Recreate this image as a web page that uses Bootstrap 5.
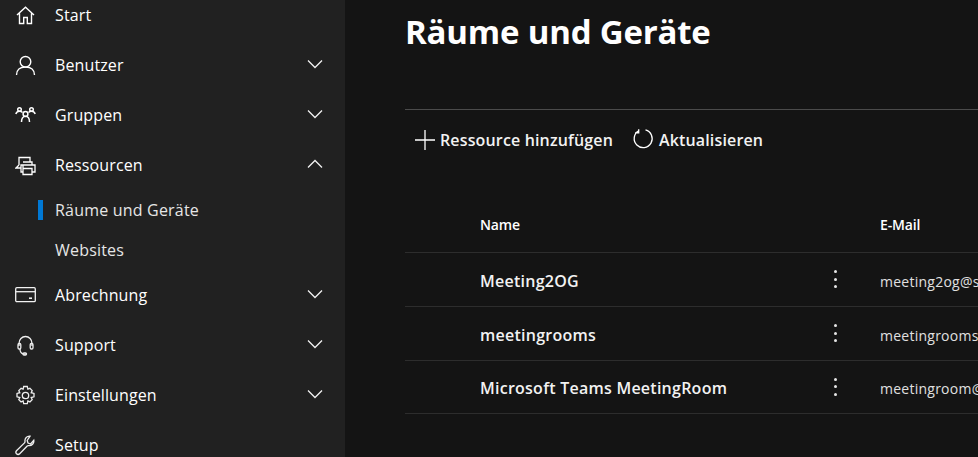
<!DOCTYPE html>
<html lang="de">
<head>
<meta charset="utf-8">
<title>Räume und Geräte</title>
<link href="https://cdn.jsdelivr.net/npm/bootstrap@5.3.0/dist/css/bootstrap.min.css" rel="stylesheet">
<style>
html,body{height:457px;overflow:hidden;margin:0;background:#141414}
body{font-family:"Open Sans","Noto Sans",sans-serif;color:#fff}
.shell{height:457px;width:978px;overflow:hidden}
.side{width:345px;background:#212121;flex:none;height:457px;overflow:hidden}
.side-list{margin-top:-10px}
.nav-row{height:50px;padding-left:15px;padding-right:21px;color:#fff;font-size:16px;letter-spacing:.12px}
.nav-row svg.ic{width:21px;height:21px;flex:none;margin-right:19px}
.nav-row span{flex:1}
.nav-row .chev{margin-top:-2px}
.sub-row{height:40px;padding-left:55px;position:relative;color:#e6e6e6;font-size:16px;letter-spacing:.2px}
.sub-mark{position:absolute;left:38px;top:10px;width:5px;height:20px;background:#0078d4}
.chev{width:18px;height:10px;flex:none}
.main-pane{flex:1;min-width:0;padding-left:60px;overflow:hidden}
.page-title{font-size:33px;font-weight:700;line-height:44px;margin:10px 0 55px;letter-spacing:-.2px;white-space:nowrap}
.tool-bar{border-top:1px solid #4b4b4b;height:61px;padding-left:9px;gap:20px}
.tool-btn{color:#f2f2f2;font-size:16px;font-weight:600;letter-spacing:.15px;background:none;border:0;padding:0;gap:4px;white-space:nowrap}
.tool-btn svg{width:22px;height:22px;flex:none;overflow:visible}
.res-table{width:573px;table-layout:fixed;margin:29px 0 0;--bs-table-bg:transparent;--bs-table-color:#fff}
.res-table th{font-size:14px;font-weight:600;height:53px;padding:0 0 2px;letter-spacing:-.15px;vertical-align:middle;border-bottom:1px solid #2d2d2d}
.res-table td{height:54px;padding:0;vertical-align:middle;border-bottom:1px solid #2d2d2d;white-space:nowrap;overflow:hidden}
.res-table tr:last-child td{height:53px}
.res-table td.res-name,.res-table td.res-mail{padding-top:4px}
.res-table tr:last-child td.res-name,.res-table tr:last-child td.res-mail{padding-top:3px}
.res-name{font-size:16px;font-weight:600;letter-spacing:.25px}
.res-table td.res-name{color:#f2f2f2}
.res-table td.res-mail{font-size:14px;color:#e0e0e0;letter-spacing:.25px}
.col-a{width:75px}.col-b{width:320px}.col-c{width:80px}
.dots{display:block;width:4px;margin-left:34px}
.dots i{display:block;width:3px;height:3px;border-radius:50%;background:#e6e6e6;margin-bottom:4.5px}
.dots i:last-child{margin-bottom:0}
</style>
</head>
<body>
<div class="shell d-flex">
  <nav class="side">
    <div class="side-list d-flex flex-column">
      <div class="nav-row d-flex align-items-center">
        <svg class="ic" viewBox="0 0 21 21" fill="none" stroke="#fff" stroke-width="1.4"><path d="M2 10 10.5 2.2 19 10M4.500 8v10.500h4.200v-6h3.600v6h4.200V8"/></svg>
        <span>Start</span>
      </div>
      <div class="nav-row d-flex align-items-center">
        <svg class="ic" viewBox="0 0 21 21" fill="none" stroke="#fff" stroke-width="1.4"><circle cx="10.500" cy="6.800" r="5.300"/><path d="M1.500 20c0-5 3.500-8 9-8s9 3 9 8"/></svg>
        <span>Benutzer</span>
        <svg class="chev" viewBox="0 0 18 10" fill="none" stroke="#f2f2f2" stroke-width="1.3"><path d="M2 1.500 9 8.500l7-7"/></svg>
      </div>
      <div class="nav-row d-flex align-items-center">
        <svg class="ic" viewBox="0 0 21 21" fill="none" stroke="#fff" stroke-width="1.5"><circle cx="4.500" cy="4.500" r="1.800"/><circle cx="16.500" cy="4.500" r="1.800"/><circle cx="10.500" cy="9" r="2.400"/><path d="M.8 9c.7-1.800 2-2.700 3.700-2.700 1.300 0 2.200.4 3 1.200M20.200 9c-.7-1.800-2-2.700-3.700-2.700-1.300 0-2.200.4-3 1.200M6.500 17c0-3 1.300-5.800 4-5.800s4 2.800 4 5.800"/></svg>
        <span>Gruppen</span>
        <svg class="chev" viewBox="0 0 18 10" fill="none" stroke="#f2f2f2" stroke-width="1.3"><path d="M2 1.500 9 8.500l7-7"/></svg>
      </div>
      <div class="nav-row d-flex align-items-center">
        <svg class="ic" viewBox="0 0 21 21" fill="none" stroke="#fff" stroke-width="1.3"><path d="M4 10V2.500h11V7M6 13H1l3-3"/><path d="M8 7h9v3h3v7h-3M8 17H6v-7h2zM8 10h9M8 13.500h9v6H8z"/></svg>
        <span>Ressourcen</span>
        <svg class="chev" viewBox="0 0 18 10" fill="none" stroke="#f2f2f2" stroke-width="1.3"><path d="M2 8.500 9 1.500l7 7"/></svg>
      </div>
      <div class="sub-row d-flex align-items-center"><i class="sub-mark"></i>Räume und Geräte</div>
      <div class="sub-row d-flex align-items-center">Websites</div>
      <div class="nav-row d-flex align-items-center">
        <svg class="ic" viewBox="0 0 21 21" fill="none" stroke="#f2f2f2" stroke-width="1.3"><rect x=".7" y="2.700" width="19.600" height="14" rx="1.200"/><path d="M1 6.700h19"/><path d="M14 13.200h3" stroke-width="1.600"/></svg>
        <span>Abrechnung</span>
        <svg class="chev" viewBox="0 0 18 10" fill="none" stroke="#f2f2f2" stroke-width="1.3"><path d="M2 1.500 9 8.500l7-7"/></svg>
      </div>
      <div class="nav-row d-flex align-items-center">
        <svg class="ic" viewBox="0 0 21 21" fill="none" stroke="#eee" stroke-width="1.3"><path d="M4 11V8.500a6.500 7 0 0 1 13 0V11"/><rect x="3" y="8.500" width="2.800" height="5.500" rx="1.200"/><rect x="15.200" y="8.500" width="2.800" height="5.500" rx="1.200"/><path d="M5 14c0 3 1 4.500 3.500 5h2.500"/><rect x="8" y="17.800" width="3.500" height="2.200" rx="1"/></svg>
        <span>Support</span>
        <svg class="chev" viewBox="0 0 18 10" fill="none" stroke="#f2f2f2" stroke-width="1.3"><path d="M2 1.500 9 8.500l7-7"/></svg>
      </div>
      <div class="nav-row d-flex align-items-center">
        <svg class="ic" viewBox="0 0 21 21" fill="none" stroke="#eee" stroke-width="1.3"><circle cx="10.500" cy="10.500" r="3.200"/><path d="M8.700 1.500h3.600l.6 2.700 2-.9 2.300 2.300-1 2.100 2.800.7v3.400l-2.800.7 1 2.100-2.300 2.300-2-.9-.6 2.700H8.700l-.6-2.700-2 .9-2.300-2.300 1-2.100-2.800-.7V8.400l2.800-.7-1-2.100 2.300-2.300 2 .9z"/></svg>
        <span>Einstellungen</span>
        <svg class="chev" viewBox="0 0 18 10" fill="none" stroke="#f2f2f2" stroke-width="1.3"><path d="M2 1.500 9 8.500l7-7"/></svg>
      </div>
      <div class="nav-row d-flex align-items-center">
        <svg class="ic" viewBox="0 0 21 21" fill="none" stroke="#eee" stroke-width="1.3"><path d="M15 1.200c-3-.3-5.500 2.200-5 5.300.1.600-.1 1-.5 1.400L1.700 15.500c-1 1-1 2.300-.2 3.200.9.900 2.300.9 3.200 0l7.500-7.700c.4-.4.900-.5 1.400-.4 3.200.4 5.700-2.300 5.200-5.300L15.600 9 13 8l-.8-2.500z"/></svg>
        <span>Setup</span>
      </div>
    </div>
  </nav>
  <main class="main-pane">
    <h1 class="page-title">Räume und Geräte</h1>
    <div class="tool-bar d-flex align-items-center">
      <button class="tool-btn d-flex align-items-center" type="button">
        <svg viewBox="0 0 22 22" fill="none" stroke="#fff" stroke-width="1.300"><path d="M11 1v20M1 11h20"/></svg>Ressource hinzufügen
      </button>
      <button class="tool-btn d-flex align-items-center" type="button">
        <svg viewBox="0 0 22 22" fill="none" stroke="#fff" stroke-width="1.300"><path d="M12.500 .9a9 9 0 1 1-6.800.9M5.700 .2v3.700H2"/></svg>Aktualisieren
      </button>
    </div>
    <table class="table res-table">
      <colgroup><col class="col-a"><col class="col-b"><col class="col-c"><col></colgroup>
      <thead><tr><th></th><th>Name</th><th></th><th>E-Mail</th></tr></thead>
      <tbody>
        <tr><td></td><td class="res-name">Meeting2OG</td><td><span class="dots"><i></i><i></i><i></i></span></td><td class="res-mail">meeting2og@standardcontoso.onmicrosoft.com</td></tr>
        <tr><td></td><td class="res-name">meetingrooms</td><td><span class="dots"><i></i><i></i><i></i></span></td><td class="res-mail">meetingrooms@standardcontoso.onmicrosoft.com</td></tr>
        <tr><td></td><td class="res-name">Microsoft Teams MeetingRoom</td><td><span class="dots"><i></i><i></i><i></i></span></td><td class="res-mail">meetingroom@standardcontoso.onmicrosoft.com</td></tr>
      </tbody>
    </table>
  </main>
</div>
</body>
</html>
